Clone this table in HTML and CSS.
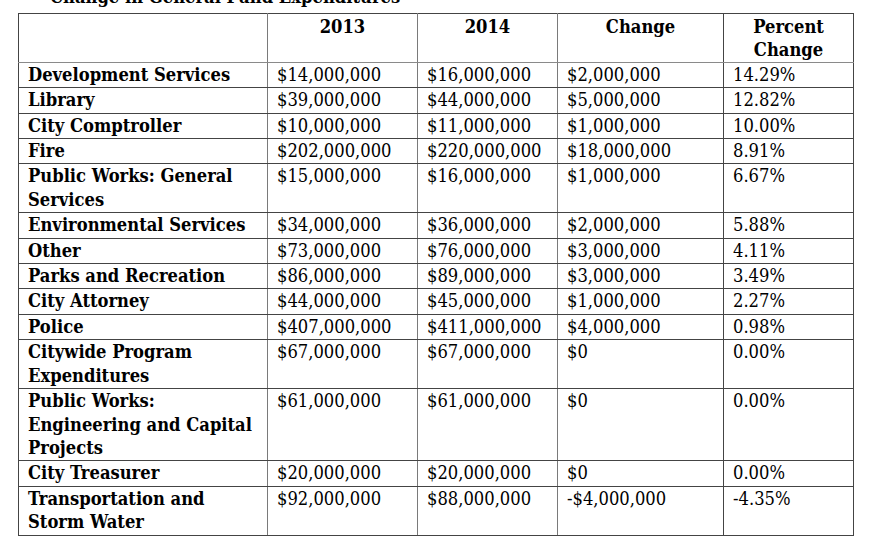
FILE: index.html
```html
<!DOCTYPE html>
<html lang="en">
<head>
<meta charset="utf-8">
<title>Change in General Fund Expenditures</title>
<link rel="stylesheet" href="styles.css">
</head>
<body>
<div class="page">
  <div class="title">Change in General Fund Expenditures</div>
  <table class="fund">
    <colgroup>
      <col class="c-name"><col class="c-y13"><col class="c-y14"><col class="c-chg"><col class="c-pct">
    </colgroup>
    <thead>
      <tr>
        <th class="blank"></th>
        <th>2013</th>
        <th>2014</th>
        <th>Change</th>
        <th>Percent<br>Change</th>
      </tr>
    </thead>
    <tbody>
      <tr><td class="name">Development Services</td><td>$14,000,000</td><td>$16,000,000</td><td>$2,000,000</td><td>14.29%</td></tr>
      <tr><td class="name">Library</td><td>$39,000,000</td><td>$44,000,000</td><td>$5,000,000</td><td>12.82%</td></tr>
      <tr><td class="name">City Comptroller</td><td>$10,000,000</td><td>$11,000,000</td><td>$1,000,000</td><td>10.00%</td></tr>
      <tr><td class="name">Fire</td><td>$202,000,000</td><td>$220,000,000</td><td>$18,000,000</td><td>8.91%</td></tr>
      <tr><td class="name">Public Works: General Services</td><td>$15,000,000</td><td>$16,000,000</td><td>$1,000,000</td><td>6.67%</td></tr>
      <tr><td class="name">Environmental Services</td><td>$34,000,000</td><td>$36,000,000</td><td>$2,000,000</td><td>5.88%</td></tr>
      <tr><td class="name">Other</td><td>$73,000,000</td><td>$76,000,000</td><td>$3,000,000</td><td>4.11%</td></tr>
      <tr><td class="name">Parks and Recreation</td><td>$86,000,000</td><td>$89,000,000</td><td>$3,000,000</td><td>3.49%</td></tr>
      <tr><td class="name">City Attorney</td><td>$44,000,000</td><td>$45,000,000</td><td>$1,000,000</td><td>2.27%</td></tr>
      <tr><td class="name">Police</td><td>$407,000,000</td><td>$411,000,000</td><td>$4,000,000</td><td>0.98%</td></tr>
      <tr><td class="name">Citywide Program Expenditures</td><td>$67,000,000</td><td>$67,000,000</td><td>$0</td><td>0.00%</td></tr>
      <tr><td class="name">Public Works: Engineering and Capital Projects</td><td>$61,000,000</td><td>$61,000,000</td><td>$0</td><td>0.00%</td></tr>
      <tr><td class="name">City Treasurer</td><td>$20,000,000</td><td>$20,000,000</td><td>$0</td><td>0.00%</td></tr>
      <tr><td class="name">Transportation and Storm Water</td><td>$92,000,000</td><td>$88,000,000</td><td>-$4,000,000</td><td>-4.35%</td></tr>
    </tbody>
  </table>
</div>
</body>
</html>
```

FILE: styles.css
```css
html, body {
  margin: 0;
  padding: 0;
  background: #ffffff;
}

body {
  font-family: "DejaVu Serif Condensed", "DejaVu Serif", serif;
  font-stretch: condensed;
  font-size: 18.2px;
  color: #000000;
  overflow: hidden;
}

.page {
  padding-left: 18px;
}

.title {
  font-weight: bold;
  line-height: 23px;
  margin-top: -15px;
  margin-bottom: 5px;
  padding-left: 32px;
}

.fund {
  border-collapse: collapse;
  table-layout: fixed;
  width: 835px;
  border: 1px solid #444;
}

.c-name { width: 249px; }
.c-y13 { width: 150px; }
.c-y14 { width: 140px; }
.c-chg { width: 166px; }
.c-pct { width: 130px; }

.fund th,
.fund td {
  line-height: 23.4px;
  padding: 0 4px 1px 9px;
  vertical-align: top;
  text-align: left;
  border: 1px solid #444;
  white-space: normal;
}

.fund th {
  font-weight: bold;
  text-align: center;
  padding: 1px 4px 0 4px;
}

.fund thead th {
  border-bottom: 1px solid #8a8a8a;
}

.fund td.name {
  font-weight: bold;
}

.fund td:nth-child(1),
.fund td:nth-child(2),
.fund td:nth-child(3),
.fund th:nth-child(1),
.fund th:nth-child(2),
.fund th:nth-child(3) {
  border-right-color: #7a7a7a;
}
```
